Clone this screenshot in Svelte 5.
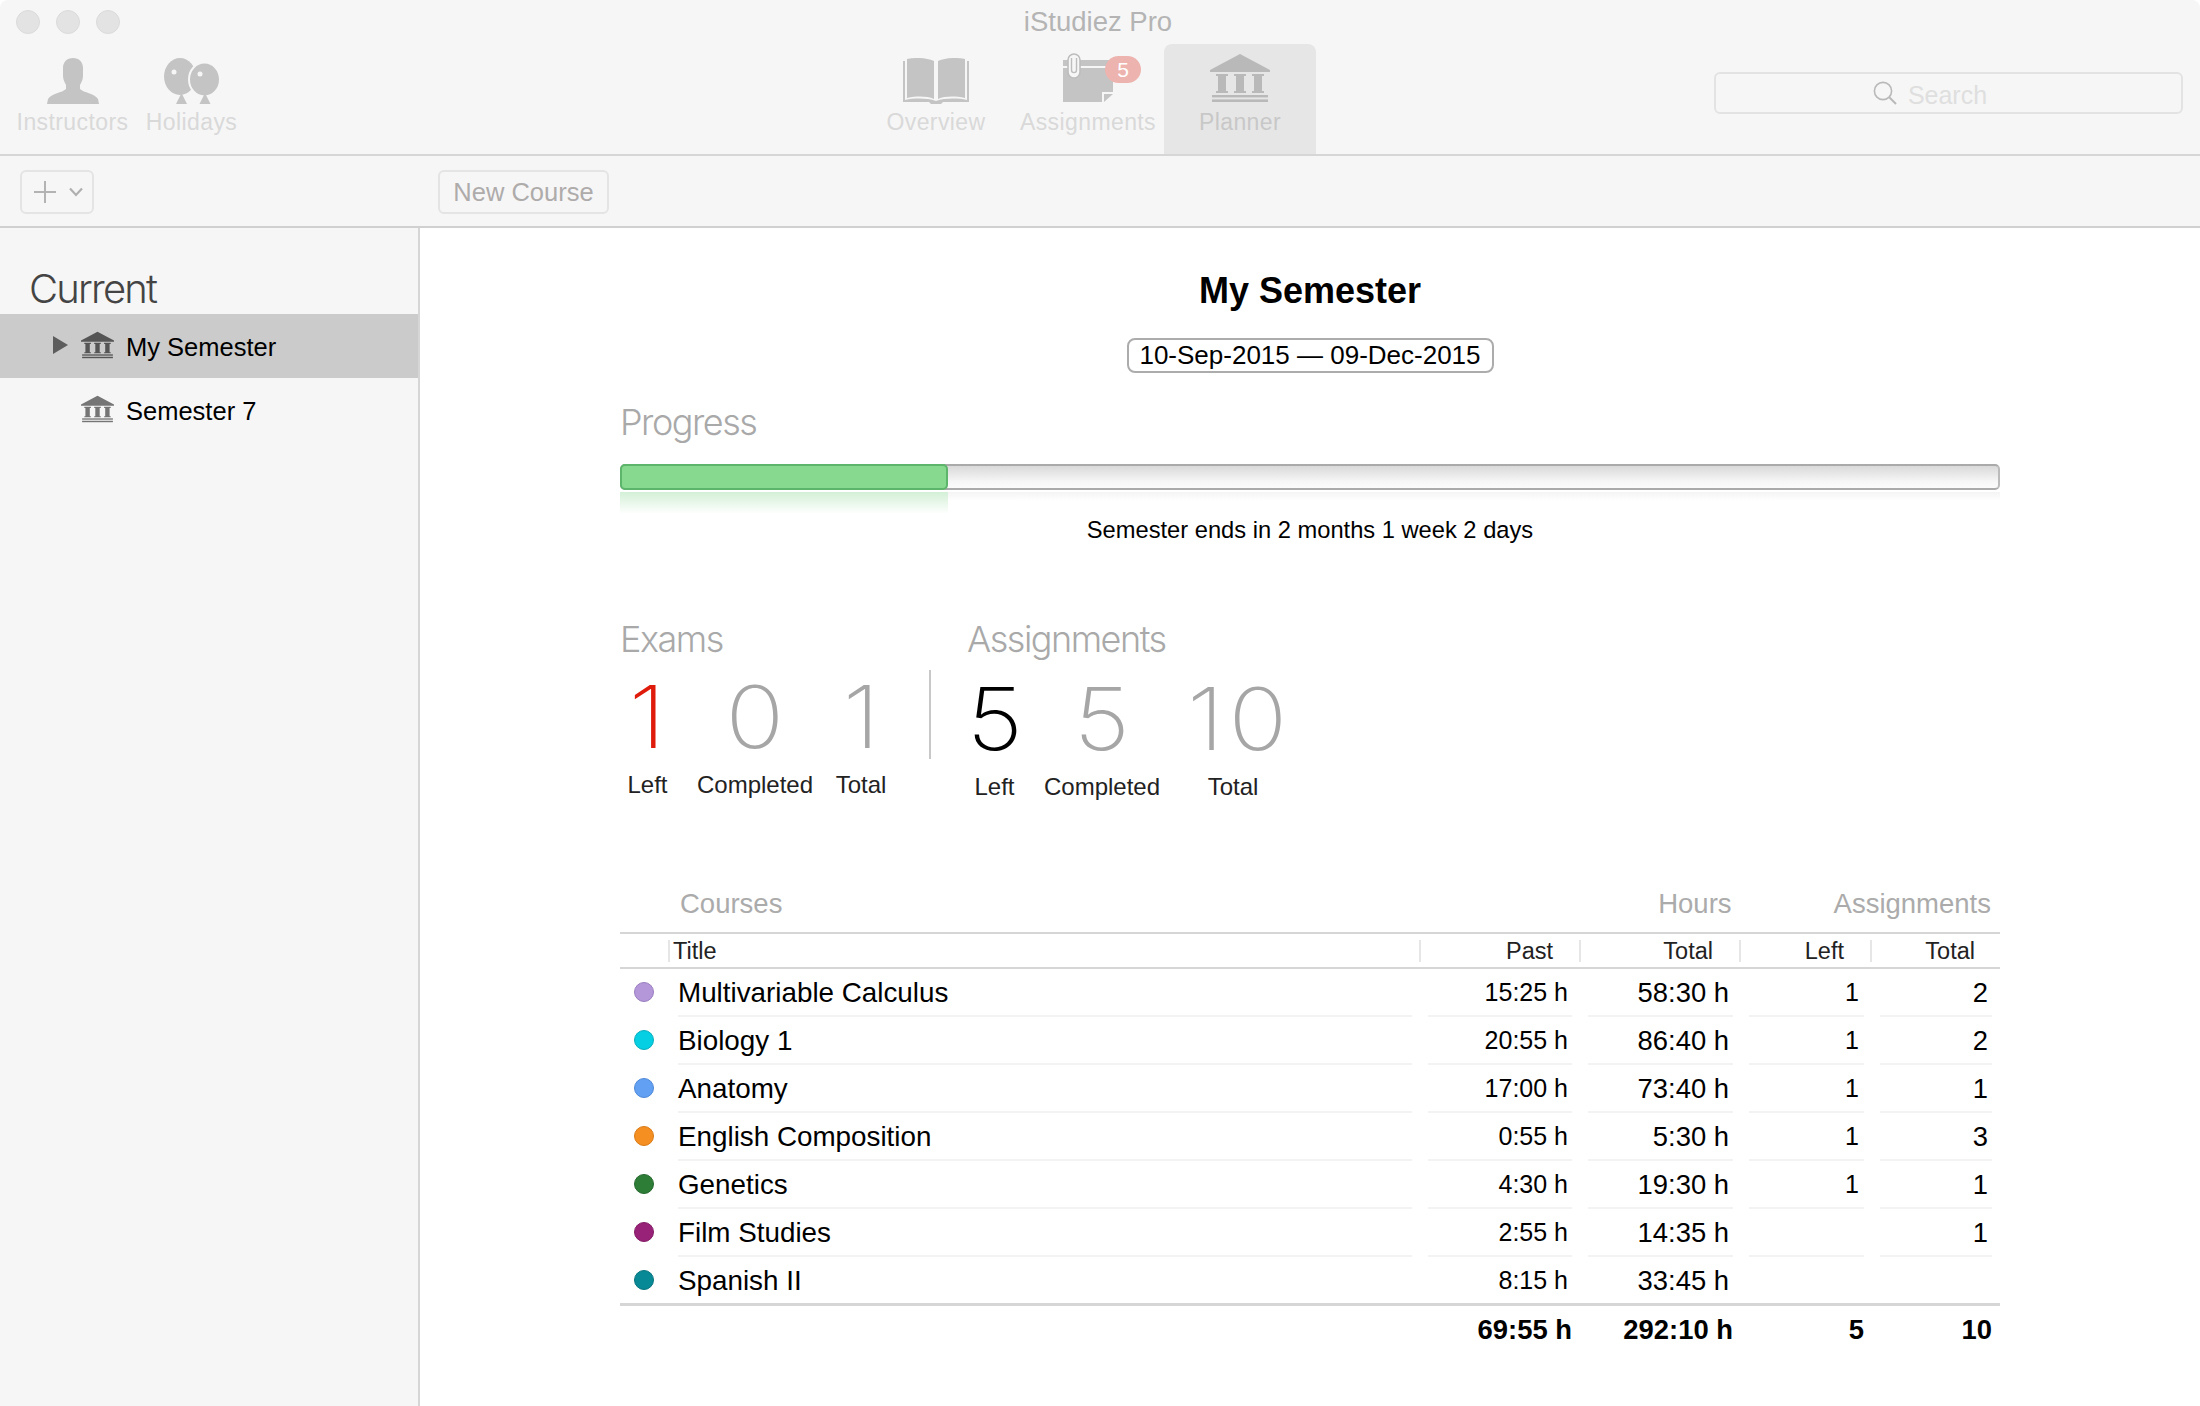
<script>
    const courses = [
        { title: 'Multivariable Calculus', color: '#b397d8', edge: '#9a7fc0', past: '15:25 h', total: '58:30 h', left: '1', all: '2' },
        { title: 'Biology 1', color: '#04cfe3', edge: '#08adbd', past: '20:55 h', total: '86:40 h', left: '1', all: '2' },
        { title: 'Anatomy', color: '#62a0f3', edge: '#4f88d6', past: '17:00 h', total: '73:40 h', left: '1', all: '1' },
        { title: 'English Composition', color: '#f58f22', edge: '#d87a16', past: '0:55 h', total: '5:30 h', left: '1', all: '3' },
        { title: 'Genetics', color: '#2e7d36', edge: '#26682d', past: '4:30 h', total: '19:30 h', left: '1', all: '1' },
        { title: 'Film Studies', color: '#982277', edge: '#821c66', past: '2:55 h', total: '14:35 h', left: '', all: '1' },
        { title: 'Spanish II', color: '#088a96', edge: '#07737d', past: '8:15 h', total: '33:45 h', left: '', all: '' }
    ];
</script>

{#snippet bank()}
    <svg class="bank" viewBox="0 0 60 48">
        <path d="M30 0 L60 16 V18 H0 V16 Z"/>
        <path d="M6 20 H18 V22 H16 V37 H18 V39 H6 V37 H8 V22 H6 Z"/>
        <path d="M24 20 H36 V22 H34 V37 H36 V39 H24 V37 H26 V22 H24 Z"/>
        <path d="M42 20 H54 V22 H52 V37 H54 V39 H42 V37 H44 V22 H42 Z"/>
        <rect x="2" y="41" width="56" height="2.4"/>
        <rect x="2" y="45.4" width="56" height="2.6"/>
    </svg>
{/snippet}

<div class="window">
    <header class="titlebar">
        <div class="topline">
            <div class="lights"><i></i><i></i><i></i></div>
            <div class="apptitle">iStudiez Pro</div>
        </div>
        <div class="tools">
            <div class="leftgroup">
                <div class="tool instructors">
                    <svg class="ic" width="52" height="46" viewBox="0 0 52 46">
                        <path d="M26 0 C32 0 36 4 36 10 V18 C36 22 34 25 33 27 V31 C37 35 47 35 51 41 L52 46 H0 L1 41 C5 35 15 35 19 31 V27 C18 25 16 22 16 18 V10 C16 4 20 0 26 0 Z"/>
                    </svg>
                    <span>Instructors</span>
                </div>
                <div class="tool holidays">
                    <svg class="ic" width="56" height="46" viewBox="0 0 56 46">
                        <ellipse cx="16" cy="18.5" rx="16" ry="18.5"/>
                        <path d="M17.5 35 L23 46 H12 Z"/>
                        <ellipse cx="40.5" cy="21.5" rx="15.5" ry="17" stroke="#f6f6f6" stroke-width="2"/>
                        <path d="M41 35 L46.5 46 H35.5 Z"/>
                        <circle cx="10" cy="14" r="2.5" fill="#f6f6f6"/>
                        <circle cx="36" cy="16" r="2.5" fill="#f6f6f6"/>
                    </svg>
                    <span>Holidays</span>
                </div>
            </div>
            <nav class="tabs">
                <div class="tab">
                    <div class="iconbox overview">
                        <svg class="ic" width="66" height="46" viewBox="0 0 66 46">
                            <path d="M4 1 C14 -1 24 0 31 3 V41 C24 38 14 38 4 40 Z"/>
                            <path d="M62 1 C52 -1 42 0 35 3 V41 C42 38 52 38 62 40 Z"/>
                            <path d="M0 3 H2 V42 C12 40 24 40 33 43 C42 40 54 40 64 42 V3 H66 V44 H40 L38 46 H28 L26 44 H0 Z"/>
                        </svg>
                    </div>
                    <span>Overview</span>
                </div>
                <div class="tab">
                    <div class="iconbox noteicon">
                        <svg class="ic" width="50" height="49" viewBox="0 0 50 49">
                            <path d="M0 7 H50 V13 H0 Z"/>
                            <path d="M0 15 H50 V39 H39 V49 H0 Z"/>
                            <path d="M41 41 H50 L41 49 Z"/>
                            <rect x="5" y="1" width="12" height="24" rx="6" fill="#f6f6f6" stroke="#bdbdbd" stroke-width="1.6"/>
                            <path d="M8.5 5 V17 C8.5 20.5 13.5 20.5 13.5 17 V5" fill="none" stroke="#bdbdbd" stroke-width="1.4"/>
                        </svg>
                        <b class="badge">5</b>
                    </div>
                    <span>Assignments</span>
                </div>
                <div class="tab active">
                    <div class="iconbox bigbank">{@render bank()}</div>
                    <span>Planner</span>
                </div>
            </nav>
            <div class="search">
                <svg width="24" height="24" viewBox="0 0 24 24">
                    <circle cx="10" cy="10" r="8.6" fill="none" stroke="#b9b9b9" stroke-width="1.6"/>
                    <path d="M16 16 L23 23" stroke="#b9b9b9" stroke-width="2"/>
                </svg>
                <span>Search</span>
            </div>
        </div>
    </header>

    <div class="toolbar">
        <button class="addbtn">
            <svg width="24" height="24" viewBox="0 0 24 24"><path d="M12 1 V23 M1 12 H23" stroke="#b3b3b3" stroke-width="2"/></svg>
            <svg width="14" height="10" viewBox="0 0 14 10"><path d="M1 1.5 L7 8 L13 1.5" fill="none" stroke="#b0b0b0" stroke-width="2.2"/></svg>
        </button>
        <button class="newcourse">New Course</button>
    </div>

    <div class="body">
        <aside class="sidebar">
            <h2>Current</h2>
            <div class="srow selected">
                <span class="tri"></span>
                <div class="sbank">{@render bank()}</div>
                <span>My Semester</span>
            </div>
            <div class="srow">
                <span class="tri none"></span>
                <div class="sbank">{@render bank()}</div>
                <span>Semester 7</span>
            </div>
        </aside>

        <main class="content">
            <h1>My Semester</h1>
            <div class="datewrap"><div class="dates">10-Sep-2015 — 09-Dec-2015</div></div>

            <div class="lighthead progresshead">Progress</div>
            <div class="bar"><div class="fill"></div></div>
            <div class="reflect"><div class="reflectfill"></div></div>
            <div class="caption">Semester ends in 2 months 1 week 2 days</div>

            <section class="stats">
                <div class="group exams">
                    <div class="lighthead">Exams</div>
                    <div class="cols">
                        <div class="stat w55"><b class="red">1</b><span>Left</span></div>
                        <div class="stat w160"><b>0</b><span>Completed</span></div>
                        <div class="stat w52"><b>1</b><span>Total</span></div>
                    </div>
                </div>
                <div class="divider"></div>
                <div class="group asg">
                    <div class="lighthead">Assignments</div>
                    <div class="cols low">
                        <div class="stat w55"><b class="black">5</b><span>Left</span></div>
                        <div class="stat w160"><b>5</b><span>Completed</span></div>
                        <div class="stat w102"><b class="ten">10</b><span>Total</span></div>
                    </div>
                </div>
            </section>

            <section class="courses">
                <div class="grouphead">
                    <span class="gh-courses">Courses</span>
                    <span class="gh-hours">Hours</span>
                    <span class="gh-asg">Assignments</span>
                </div>
                <div class="thead">
                    <div class="th title">Title</div>
                    <div class="th">Past</div>
                    <div class="th">Total</div>
                    <div class="th">Left</div>
                    <div class="th last">Total</div>
                </div>
                {#each courses as c, i}
                    <div class="row">
                        <div class="dotcell"><span class="dot" style="background:{c.color};border-color:{c.edge}"></span></div>
                        <div class="td name" class:noline={i == courses.length - 1}>{c.title}</div>
                        <div class="td num small" class:noline={i == courses.length - 1}>{c.past}</div>
                        <div class="td num" class:noline={i == courses.length - 1}>{c.total}</div>
                        <div class="td num small leftcol" class:noline={i == courses.length - 1}>{c.left}</div>
                        <div class="td num" class:noline={i == courses.length - 1}>{c.all}</div>
                    </div>
                {/each}
                <div class="row foot">
                    <div class="dotcell"></div>
                    <div class="td name noline"></div>
                    <div class="td num noline">69:55 h</div>
                    <div class="td num noline">292:10 h</div>
                    <div class="td num noline footleft">5</div>
                    <div class="td num noline">10</div>
                </div>
            </section>
        </main>
    </div>
</div>

<style>
    :global(body) {
        margin: 0;
        background: #fff;
        overflow: hidden;
    }

    .window {
        width: 2200px;
        height: 1406px;
        display: flex;
        flex-direction: column;
        font-family: "Liberation Sans", Arial, sans-serif;
        color: #000;
        overflow: hidden;
    }

    .titlebar {
        height: 154px;
        background: #f6f6f6;
        border-bottom: 2px solid #d6d6d6;
        flex: none;
        box-sizing: content-box;
        border-radius: 8px 8px 0 0;
    }

    .topline {
        height: 44px;
        position: relative;
        display: flex;
        align-items: center;
        justify-content: center;
    }

    .lights {
        position: absolute;
        left: 16px;
        top: 10px;
        display: flex;
        gap: 16px;
    }

    .lights i {
        width: 24px;
        height: 24px;
        border-radius: 50%;
        background: #e3e3e3;
        box-sizing: border-box;
        border: 1px solid #dbdbdb;
    }

    .apptitle {
        font-size: 27.5px;
        color: #b4b4b4;
        margin-left: -4px;
    }

    .tools {
        height: 110px;
        display: flex;
    }

    .leftgroup {
        display: flex;
        gap: 17px;
        padding-left: 16px;
    }

    .instructors {
        width: 113px;
    }

    .holidays {
        width: 91px;
    }

    .tool, .tab {
        display: flex;
        flex-direction: column;
        align-items: center;
        font-size: 23px;
        color: #d9d9d9;
        letter-spacing: 0.4px;
        white-space: nowrap;
    }

    .tool span, .tab span {
        line-height: 26px;
    }

    .tool {
        padding-top: 14px;
    }

    .tool .ic {
        margin-bottom: 5px;
    }

    .ic {
        display: block;
        fill: #c4c4c5;
    }

    .tabs {
        display: flex;
        margin-left: 623px;
    }

    .tab {
        width: 152px;
        padding-top: 10px;
        box-sizing: border-box;
    }

    .iconbox {
        height: 55px;
    }

    .overview {
        padding-top: 4px;
        box-sizing: border-box;
    }

    .tab.active {
        background: #e6e6e6;
        border-radius: 8px 8px 0 0;
        color: #c8c8c8;
    }

    .noteicon {
        position: relative;
        width: 78px;
        margin: -1px 0 1px 28px;
    }

    .badge {
        position: absolute;
        left: 42px;
        top: 3px;
        width: 36px;
        height: 27px;
        border-radius: 14px;
        background: #edb3ae;
        color: #fff;
        font-weight: 400;
        font-size: 21px;
        line-height: 27px;
        text-align: center;
        letter-spacing: 0;
    }

    .bigbank {
        width: 60px;
    }

    .bigbank :global(.bank) {
        fill: #b9b9b9;
        height: 48px;
    }

    .bank {
        display: block;
        width: 100%;
        height: 100%;
    }

    .search {
        margin-left: auto;
        margin-right: 17px;
        margin-top: 28px;
        width: 469px;
        height: 42px;
        box-sizing: border-box;
        border: 2px solid #e3e3e3;
        border-radius: 6px;
        display: flex;
        align-items: center;
        justify-content: center;
        gap: 11px;
        font-size: 25px;
        color: #dfdfdf;
        padding-right: 37px;
    }

    .search span {
        padding-top: 4px;
    }

    .toolbar {
        height: 70px;
        flex: none;
        background: #f6f6f6;
        border-bottom: 2px solid #d0d0d0;
        box-sizing: content-box;
        display: flex;
        align-items: center;
        padding-left: 20px;
    }

    .toolbar button {
        height: 44px;
        margin-top: 1px;
        background: #f6f6f6;
        border: 2px solid #e4e4e4;
        border-radius: 6px;
        font-family: inherit;
        box-sizing: border-box;
    }

    .addbtn {
        width: 74px;
        display: flex;
        align-items: center;
        gap: 12px;
        padding: 0 0 0 11px;
    }

    .newcourse {
        margin-left: 344px;
        width: 171px;
        padding: 2px 0 0;
        font-size: 25.5px;
        color: #aeabab;
    }

    .body {
        flex: 1;
        display: flex;
        min-height: 0;
    }

    .sidebar {
        width: 418px;
        flex: none;
        box-sizing: content-box;
        background: #f6f6f6;
        border-right: 2px solid #d6d6d6;
    }

    .sidebar h2 {
        margin: 0;
        height: 86px;
        box-sizing: border-box;
        padding: 36px 0 0 29px;
        font-weight: 300;
        font-family: Inter, "Liberation Sans", sans-serif;
        font-size: 40px;
        line-height: 50px;
        letter-spacing: -1.8px;
        color: #444;
    }

    .srow {
        height: 64px;
        display: flex;
        align-items: center;
        padding-left: 53px;
        font-size: 25.5px;
    }

    .srow > span:last-child {
        padding-top: 2px;
    }

    .srow.selected {
        background: #cbcbcb;
    }

    .tri {
        width: 0;
        height: 0;
        border-left: 15px solid #5d5d5d;
        border-top: 9px solid transparent;
        border-bottom: 9px solid transparent;
        margin-right: 13px;
        margin-top: -3px;
    }

    .tri.none {
        border-left-color: transparent;
    }

    .sbank {
        width: 33px;
        height: 28px;
        margin-right: 12px;
        margin-top: -2px;
    }

    .sbank :global(.bank) {
        fill: #757575;
    }

    .selected .sbank :global(.bank) {
        fill: #555;
    }

    .content {
        flex: 1;
        padding: 41px 200px 0 200px;
        min-width: 0;
    }

    h1 {
        margin: 0;
        font-size: 36px;
        line-height: 44px;
        text-align: center;
        font-weight: 700;
        color: #000;
    }

    .datewrap {
        display: flex;
        justify-content: center;
        margin-top: 25px;
    }

    .dates {
        height: 35px;
        width: 367px;
        box-sizing: border-box;
        border: 2px solid #acacac;
        border-radius: 8px;
        font-size: 26px;
        line-height: 30px;
        text-align: center;
    }

    .lighthead {
        font-family: Inter, "Liberation Sans", sans-serif;
        font-weight: 300;
        font-size: 36px;
        line-height: 44px;
        letter-spacing: -1.5px;
        color: #a9a9a9;
    }

    .progresshead {
        margin-top: 27px;
    }

    .bar {
        margin-top: 20px;
        height: 26px;
        box-sizing: border-box;
        border: 2px solid #aaa;
        border-left-color: #bbb;
        border-right-color: #bbb;
        border-radius: 5px;
        background: linear-gradient(#d9d9d9, #f6f6f6 70%, #fbfbfb);
        position: relative;
    }

    .fill {
        position: absolute;
        left: -2px;
        top: -2px;
        bottom: -2px;
        width: 328px;
        box-sizing: border-box;
        background: #86d98f;
        border: 2px solid #5cb56a;
        border-radius: 5px;
    }

    .reflect {
        margin-top: 2px;
        height: 22px;
        background: linear-gradient(#f4f4f4, #fff 40%);
    }

    .reflectfill {
        width: 328px;
        height: 100%;
        background: linear-gradient(#d3f0d6, #fff);
    }

    .caption {
        text-align: center;
        font-size: 23.7px;
        line-height: 28px;
        margin-top: 2px;
    }

    .stats {
        display: flex;
        margin-top: 73px;
    }

    .divider {
        width: 2px;
        height: 89px;
        background: #c8c8c8;
        margin: 53px 36px 0 42px;
    }

    .cols {
        display: flex;
        margin-top: 13px;
    }

    .cols.low {
        margin-top: 15px;
    }

    .stat {
        display: flex;
        flex-direction: column;
        align-items: center;
        font-size: 24px;
        color: #222;
    }

    .stat b {
        display: inline-block;
        font-family: Inter, "Liberation Sans", sans-serif;
        font-weight: 200;
        font-size: 86px;
        line-height: 86px;
        color: #a6a6a6;
        transform: scaleX(1.13);
    }

    .stat b.red {
        color: #df1c0c;
    }

    .stat b.black {
        color: #000;
    }

    .stat b.ten {
        letter-spacing: 4px;
        margin-left: 12px;
    }

    .stat span {
        margin-top: 11px;
        line-height: 28px;
    }

    .w55 { width: 55px; }
    .w52 { width: 52px; }
    .w160 { width: 160px; }
    .w102 { width: 102px; }

    .courses {
        margin-top: 79px;
    }

    .grouphead {
        height: 47px;
        display: flex;
        font-size: 27.5px;
        line-height: 48px;
        color: #ababab;
        padding-bottom: 5px;
    }

    .gh-courses {
        margin-left: 60px;
    }

    .gh-hours {
        margin-left: auto;
    }

    .gh-asg {
        margin-left: 102px;
        margin-right: 9px;
    }

    .thead, .row {
        display: grid;
        grid-template-columns: 50px 750px 160px 161px 131px 128px;
    }

    .thead {
        grid-template-columns: 800px 160px 160px 131px 129px;
        height: 33px;
        border-top: 2px solid #d6d6d6;
        border-bottom: 2px solid #d6d6d6;
        box-sizing: content-box;
        align-items: center;
        font-size: 23.5px;
        color: #222;
    }

    .th {
        height: 22px;
        line-height: 22px;
        text-align: right;
        padding-right: 26px;
        border-right: 2px solid #e6e6e6;
        margin-right: -1px;
    }

    .th.title {
        text-align: left;
        padding: 0 0 0 53px;
        position: relative;
    }

    .th.title::before {
        content: "";
        position: absolute;
        left: 48px;
        top: 0;
        bottom: 0;
        width: 2px;
        background: #e6e6e6;
    }

    .th.last {
        border-right: 0;
    }

    .row {
        height: 48px;
    }

    .dotcell {
        display: flex;
        align-items: center;
        padding-left: 14px;
    }

    .dot {
        width: 20px;
        height: 20px;
        box-sizing: border-box;
        border-radius: 50%;
        border: 1px solid;
        margin-top: -2px;
    }

    .td {
        margin: 0 8px;
        border-bottom: 2px solid #f3f3f3;
        font-size: 27.4px;
        line-height: 46px;
        height: 48px;
        padding-top: 1px;
        box-sizing: border-box;
    }

    .td.noline {
        border-bottom-color: transparent;
    }

    .name {
        font-size: 27.8px;
    }

    .num {
        text-align: right;
        padding-right: 4px;
    }

    .small {
        font-size: 25px;
        line-height: 44px;
    }

    .leftcol {
        padding-right: 5px;
    }

    .foot {
        border-top: 3px solid #d6d6d6;
        margin-top: -2px;
        height: 50px;
    }

    .foot .td {
        font-weight: 700;
        line-height: 46px;
        padding-right: 0;
        border: 0;
    }

    .foot .footleft {
        padding-right: 0;
    }
</style>
